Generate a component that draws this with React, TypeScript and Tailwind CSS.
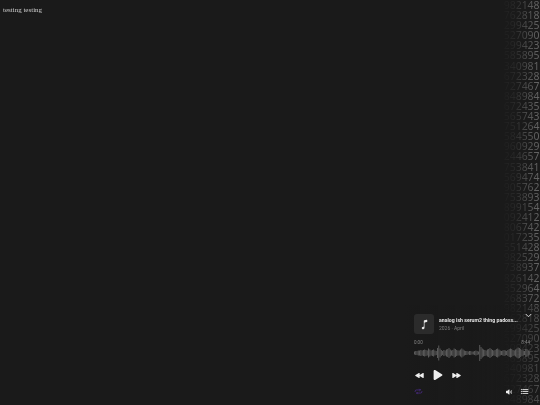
import { IoMusicalNote, IoPlay, IoPlayBack, IoPlayForward, IoRepeat, IoVolumeMedium, IoList, IoChevronDown } from "react-icons/io5";

const ROWS = ["982148","762818","299425","527090","299423","585895","340981","672328","727467","848984","672435","565743","751264","584550","960929","244657","753841","569474","905762","753893","899154","092412","806742","017235","551428","982529","738937","826142","352964","268372"];
const ALL = [...ROWS, ...ROWS.slice(0, 11)];

const WAVE = [3,4,4,5,5,6,5,6,7,6,5,9,7,5,6,7,5,4,10,15,9,6,4,6,5,7,8,10,7,5,6,9,8,6,5,5,7,9,7,5,4,4,3,4,4,3,3,4,5,4,3,16,12,9,7,6,5,7,8,10,8,6,5,6,8,9,7,5,4,5,6,5,4,6,8,9,8,6,5,7,9,11,10,8,6,5,4,8,7,5,3];

export default function App() {
  return (
    <div className="relative h-[405px] w-[540px] overflow-hidden bg-[#1a1a1a] font-['Liberation_Serif',serif]">
      <div className="pl-[3px] pt-[6px] text-[7px] leading-[9px] text-[#cccccc] [will-change:transform]">testing testing</div>

      <div className="absolute right-[0.5px] top-0 font-['Noto_Sans',sans-serif] text-[10.4px] leading-[10.1px] tabular-nums text-[#6a6a6a] [mask-image:linear-gradient(to_right,rgba(0,0,0,0.05),rgba(0,0,0,0.2)_33%,rgba(0,0,0,0.65)_66%,black)]">
        {ALL.map((r, i) => (
          <div key={i}>{r}</div>
        ))}
      </div>

      <div className="absolute bottom-0 right-0 flex h-[100px] w-[135px] flex-col bg-gradient-to-r from-[#1a1a1a] via-[#1a1a1a]/85 to-[#1a1a1a]/30 pl-[9px] pr-[9px] font-['Roboto',sans-serif] [will-change:transform]">
        <div className="mt-[9px] flex items-center gap-[5px]">
          <div className="flex h-[20px] w-[20px] shrink-0 items-center justify-center rounded-[3px] bg-[#2b2b2b] text-[#e8e8e8]">
            <IoMusicalNote size={11} />
          </div>
          <div className="min-w-0 flex-1">
            <div className="whitespace-nowrap text-[5.2px] font-bold leading-[8px] text-[#e4e4e4]">analog ish serum2 thing padoss...</div>
            <div className="text-[5px] leading-[8px] text-[#7c7c7c]">2026 · April</div>
          </div>
        </div>
        <div className="mt-[6px] flex justify-between pr-[1px] text-[4.5px] leading-[6px] text-[#888]">
          <span>0:00</span>
          <span>8:44</span>
        </div>
        <svg className="-mt-[3px] block" width="117" height="20" viewBox="0 0 117 20">
          {WAVE.map((h, i) => (
            <rect key={i} x={i * 1.28} y={10 - h / 2} width="0.9" height={h} fill="#626262" />
          ))}
        </svg>
        <div className="mt-[5px] flex items-center gap-[7px] pl-[1px] text-[#eee]">
          <IoPlayBack size={9} />
          <IoPlay size={14} />
          <IoPlayForward size={9} />
        </div>
        <div className="mt-[5px] flex items-center justify-between pr-[2px]">
          <IoRepeat size={9} className="text-[#5f32b0]" />
          <div className="flex items-center gap-[7px] text-[#eee]">
            <IoVolumeMedium size={8} />
            <IoList size={9} />
          </div>
        </div>
        <IoChevronDown size={9} className="absolute right-[7px] top-[6px] text-[#eee]" />
      </div>
    </div>
  );
}
